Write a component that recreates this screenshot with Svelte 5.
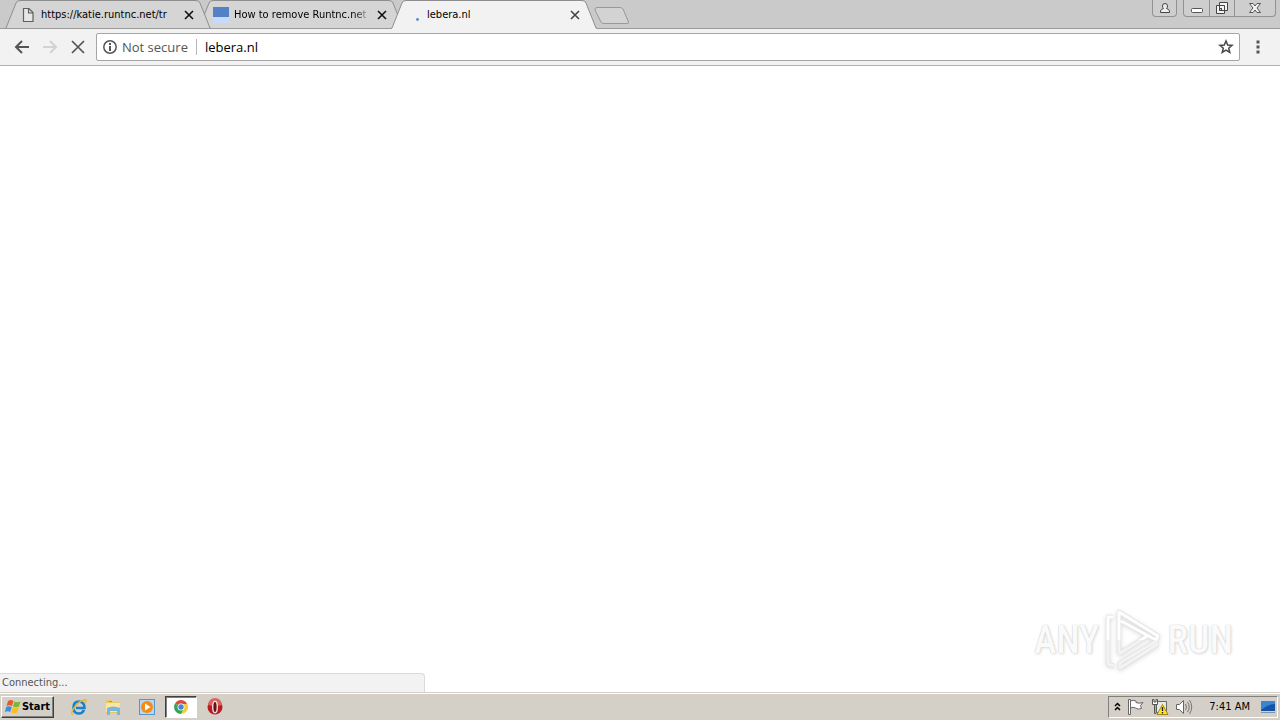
<script>
  const tabs = [
    { title: 'https://katie.runtnc.net/tr', icon: 'page', front: true },
    { title: 'How to remove Runtnc.net r', icon: 'site', fade: true },
    { title: 'lebera.nl', icon: 'loading', active: true }
  ];
  let address = $state('lebera.nl');
</script>

<div class="screen">
  <header class="strip">
    <div class="tabs" role="tablist">
      {#each tabs as tab}
        <div class="tab" class:active={tab.active} class:front={tab.front}>
          <svg class="shape" viewBox="0 0 206 29" aria-hidden="true">
            <path d="M0 29 L1 28 L11 3 Q12 .5 15 .5 H191 Q194 .5 195 3 L205 28 L206 29Z" fill={tab.active ? '#f2f2f2' : '#d5d5d5'} />
            <path d="M0 28.5 L1 28 L11 3 Q12 .5 15 .5 H191 Q194 .5 195 3 L205 28 L206 28.5" fill="none" stroke="#8e8e8e" />
            {#if !tab.active}<path d="M1 28.500H205" stroke="#999" />{/if}
          </svg>
          <span class="fav">
            {#if tab.icon === 'page'}
              <svg width="16" height="16" viewBox="0 0 16 16"><path d="M3.5 1.5H9L13 5.5V14.5H3.5Z M8.5 1.5V6H13" fill="#e6e6e6" stroke="#606060" stroke-width="1.2" /></svg>
            {:else if tab.icon === 'site'}
              <svg width="16" height="16" viewBox="0 0 16 16"><path d="M0 0H16V10H0Z" fill="#557fc7" /><path d="M0 10H16V16H0Z" fill="#c6dafa" /></svg>
            {:else}
              <svg width="16" height="16" viewBox="0 0 16 16"><circle cx="11.500" cy="12.500" r="1.4" fill="#4c8bd8" /></svg>
            {/if}
          </span>
          <button class="title" class:fade={tab.fade} role="tab" aria-selected={!!tab.active}>{tab.title}</button>
          <button class="close" aria-label="Close tab"><svg width="10" height="10" viewBox="0 0 10 10"><path d="M1 1L9 9M9 1L1 9" stroke={tab.active ? '#444' : '#111'} stroke-width="1.6" /></svg></button>
        </div>
      {/each}
      <button class="newtab" aria-label="New tab"><svg width="36" height="18" viewBox="0 0 36 18"><path d="M3 .5H26Q28 .5 29 2L34.500 15Q35 16.500 33 16.500H10Q8 16.500 7 15L1 3Q.5 .5 3 .5Z" fill="#d3d3d3" stroke="#999" /></svg></button>
    </div>
    <div class="wincontrols">
      <button class="profile" aria-label="Profile"><svg width="12" height="12" viewBox="0 0 12 12"><path d="M1.500 10.500V9Q2 7 4.500 6.500Q3.500 5.500 3.500 4Q3.500 1.500 6 1.500T8.500 4Q8.500 5.500 7.500 6.500Q10 7 10.500 9V10.500Z" fill="#eee" stroke="#444" /></svg></button>
      <div class="wingroup">
        <button aria-label="Minimize"><svg width="14" height="14" viewBox="0 0 14 14"><rect x="1.500" y="7.500" width="11" height="4" rx="1" fill="#fff" stroke="#555" /></svg></button>
        <button aria-label="Restore"><svg width="14" height="14" viewBox="0 0 14 14"><path d="M4.500 1.500H12.500V9.500H4.500Z M1.500 4.500H9.500V12.500H1.500Z" fill="#f4f4f4" stroke="#444" /><rect x="4.500" y="7.500" width="2" height="2" fill="#ccc" stroke="#444" /></svg></button>
        <button class="wide" aria-label="Close window"><svg width="14" height="12" viewBox="0 0 14 12"><path d="M1.500 1.500H5L7 4L9 1.500H12.500L9 6L12.500 10.500H9L7 8L5 10.500H1.500L5 6Z" fill="#f4f4f4" stroke="#555" /></svg></button>
      </div>
    </div>
  </header>

  <nav class="toolbar">
    <button class="nav" aria-label="Back"><svg width="16" height="16" viewBox="0 0 16 16"><path d="M15 8H2M8 2L2 8L8 14" fill="none" stroke="#555" stroke-width="2" /></svg></button>
    <button class="nav" aria-label="Forward" disabled><svg width="16" height="16" viewBox="0 0 16 16"><path d="M1 8H14M8 2L14 8L8 14" fill="none" stroke="#d2d2d2" stroke-width="2" /></svg></button>
    <button class="nav" aria-label="Stop loading"><svg width="16" height="16" viewBox="0 0 16 16"><path d="M2 2L14 14M14 2L2 14" stroke="#555" stroke-width="1.700" /></svg></button>
    <div class="omnibox">
      <svg width="16" height="16" viewBox="0 0 16 16" aria-hidden="true"><circle cx="8" cy="8" r="6.200" fill="none" stroke="#555" stroke-width="1.500" /><path d="M8 4V6M8 7V12" stroke="#555" stroke-width="2" /></svg>
      <label for="url">Not secure</label>
      <input id="url" type="text" bind:value={address} spellcheck="false" />
      <button class="star" aria-label="Bookmark this page"><svg width="16" height="16" viewBox="0 0 16 16"><path d="M8 2L9.700 6.100L14 6.400L10.700 9.200L11.800 13.500L8 11.200L4.200 13.500L5.300 9.200L2 6.400L6.300 6.100Z" fill="none" stroke="#484848" stroke-width="1.500" /></svg></button>
    </div>
    <button class="menu" aria-label="Menu"><svg width="4" height="14" viewBox="0 0 4 14"><path d="M.5 .5H3.500V3.500H.5ZM.5 5.500H3.500V8.500H.5ZM.5 10.500H3.500V13.500H.5Z" fill="#555" /></svg></button>
  </nav>

  <main>
    <div class="watermark">
      <span>ANY</span>
      <svg width="58" height="64" viewBox="0 0 58 64" aria-hidden="true">
        <defs><linearGradient id="wm" gradientUnits="userSpaceOnUse" x1="0" y1="0" x2="0" y2="64"><stop offset=".5" stop-color="#fff" /><stop offset=".5" stop-color="#f3f3f3" /></linearGradient></defs>
        <g fill="none" stroke-linejoin="round">
          <path d="M9 9H4V56L10 58M15 46V4L54 28L52 32L17 13M54 32L16 55V60L54 36M15 46L43 28" stroke="#e2e2e2" stroke-width="4.500" />
          <path d="M9 9H4V56L10 58M15 46V4L54 28L52 32L17 13M54 32L16 55V60L54 36M15 46L43 28" stroke="url(#wm)" stroke-width="3" />
        </g>
      </svg>
      <span>RUN</span>
    </div>
    <div class="status" role="status">Connecting...</div>
  </main>

  <footer class="taskbar">
    <button class="start">
      <svg width="17" height="16" viewBox="0 0 17 16"><path d="M3 2Q6 0 8.500 2L7 7Q4.500 5.500 1.500 7Z" fill="#e65b2c" /><path d="M9.500 2.500Q12 4 15.500 2.500L14 7.500Q11 9 8 7.500Z" fill="#7db72f" /><path d="M1.200 8Q4 6.500 6.700 8L5.200 13Q3 11.500 0 13Z" fill="#3b8edb" /><path d="M7.700 8.500Q10.500 10 13.700 8.500L12.200 13.500Q9 15 6.200 13.500Z" fill="#f7bd20" /></svg>
      Start
    </button>
    <div class="quick">
      <button aria-label="Internet Explorer"><svg width="18" height="18" viewBox="0 0 18 18"><path d="M14 12Q12.500 15.500 8.700 15.500Q3.500 15.500 3.500 9.500T9 3.500Q14.500 4 14.500 10H6" fill="none" stroke="#1683cf" stroke-width="2.600" /><path d="M3 16.500Q0 16 4 10Q9 3 14 2Q18 1 15 5" fill="none" stroke="#e9b835" stroke-width="1.400" /></svg></button>
      <button aria-label="Explorer"><svg width="18" height="18" viewBox="0 0 18 18"><path d="M2 2H7L8 4H15V15H2Z" fill="#e8c765" /><path d="M2 5H16L15 14H2Z" fill="#f9e7a1" /><path d="M3 17V10Q9 7 16 10V17H13V13H6V17Z" fill="#77b8dc" /><path d="M5 3H8V4H5Z" fill="#70b56c" /></svg></button>
      <button aria-label="Media Player"><svg width="18" height="18" viewBox="0 0 18 18"><rect x="1.500" y="1.500" width="15" height="15" fill="#b9d6ef" stroke="#5596ce" /><circle cx="9" cy="9" r="6" fill="#f28b17" /><path d="M7 5.500L12.500 9L7 12.500Z" fill="#fff" /></svg></button>
      <button class="current" aria-label="Chrome"><svg width="16" height="16" viewBox="0 0 16 16"><path d="M8 8L2 4.500A7 7 0 0 1 14 4.500Z" fill="#df4b3d" /><path d="M8 8L2 4.500A7 7 0 0 0 8 15L11 10Z" fill="#31a653" /><path d="M8 8V5H14.300A7 7 0 0 1 8 15L11 10Z" fill="#f7ca39" /><circle cx="8" cy="8" r="3.500" fill="#fff" /><circle cx="8" cy="8" r="2.700" fill="#4285d9" /></svg></button>
      <button aria-label="Opera"><svg width="18" height="18" viewBox="0 0 18 18"><circle cx="9" cy="9" r="7.500" fill="#b51e20" /><path d="M2 7A7 7 0 0 1 16 7Q9 9 2 7" fill="#d96360" /><ellipse cx="9" cy="9" rx="2.300" ry="5.700" fill="#691216" stroke="#f5dddd" stroke-width="1.400" /></svg></button>
    </div>
    <div class="tray">
      <button aria-label="Show hidden icons"><svg width="7" height="11" viewBox="0 0 7 11"><path d="M1 4L3.500 1.500L6 4M1 8L3.500 5.500L6 8" fill="none" stroke="#000" stroke-width="1.500" /></svg></button>
      <button aria-label="Action Center"><svg width="18" height="18" viewBox="0 0 18 18"><path d="M1.500 1.500H3.500V16.500H1.500ZM3.500 3Q6 1.500 9 3V4.500Q12 6 16 4.500L13.500 7.500L14.500 10.500Q11 12 8.500 10Q6 8.500 3.500 10Z" fill="#fff" stroke="#666" /></svg></button>
      <button aria-label="Network"><svg width="18" height="18" viewBox="0 0 18 18"><path d="M5.500 3.500H15.500V14.500H5.500Z" fill="#e9e9e3" stroke="#666" /><path d="M1.500 1.500H3V4H5V1.500H6.500V6.500H1.500ZM3.500 6.500H5V15.500H3.500Z" fill="#fff" stroke="#555" /><path d="M11.500 6.500L17 16.500H6Z" fill="#ffe52a" stroke="#a58915" /><path d="M11.500 9V13M11.500 14V15.500" stroke="#222" stroke-width="1.400" /></svg></button>
      <button aria-label="Volume"><svg width="18" height="18" viewBox="0 0 18 18"><path d="M1.500 6.500H4.500L8.500 2.500V15.500L4.500 11.500H1.500Z" fill="#fff" stroke="#666" /><path d="M10.500 6Q12.500 9 10.500 12M12.500 4Q16 9 12.500 14M14.500 2Q19 9 14.500 16" fill="none" stroke="#777" /></svg></button>
      <time>7:41 AM</time>
      <button aria-label="Show desktop"><svg width="16" height="14" viewBox="0 0 16 14"><path d="M1 1H15V11H1Z" fill="#1653a5" /><path d="M1 1H15V4Q8 4 1 10Z" fill="#3985d5" /><path d="M1 12H15V13H1Z" fill="#7895b5" /></svg></button>
    </div>
  </footer>
</div>

<style>
  :global(body) { margin: 0; }
  .screen { height: 100vh; display: flex; flex-direction: column; overflow: hidden; background: #fff; color: #000; font: 11px/14px "DejaVu Sans Condensed", "Noto Sans", sans-serif; }
  button { margin: 0; padding: 0; border: 0; background: none; color: inherit; font: inherit; display: flex; align-items: center; justify-content: center; }
  svg { display: block; flex: none; }
  .strip { height: 29px; flex: none; display: flex; justify-content: space-between; background: #cacaca; box-shadow: inset 0 -1px #999; }
  .tabs { display: flex; align-items: flex-start; padding-left: 5px; }
  .tab { position: relative; box-sizing: border-box; width: 206px; height: 29px; padding: 0 14px 0 15px; display: flex; align-items: center; margin-right: -13px; }
  .active, .front { z-index: 1; }
  .shape { position: absolute; inset: 0; width: 100%; height: 100%; }
  .fav, .title, .close { position: relative; }
  .title { flex: 1; min-width: 0; margin-left: 5px; margin-right: 3px; justify-content: flex-start; white-space: nowrap; }
  .fade { mask-image: linear-gradient(90deg, #000 88%, transparent); }
  .close { width: 16px; height: 16px; }
  .newtab { margin-left: 10px; padding-top: 7px; }
  .wincontrols { display: flex; align-items: flex-start; gap: 6px; padding-right: 4px; }
  .profile, .wingroup { box-sizing: border-box; height: 17px; border: 1px solid #929292; border-top: 0; border-radius: 0 0 4px 4px; background: #cecece; }
  .profile { width: 25px; }
  .wingroup { display: flex; }
  .wingroup button { width: 25px; height: 16px; }
  .wingroup button + button { border-left: 1px solid #929292; }
  .wingroup .wide { width: 41px; }
  .toolbar { box-sizing: border-box; height: 37px; flex: none; display: flex; align-items: center; padding: 0 12px 0 8px; border-bottom: 1px solid #b2b2b2; background: #f2f2f2; }
  .nav { width: 28px; height: 28px; }
  .omnibox { box-sizing: border-box; height: 28px; flex: 1; min-width: 0; display: flex; align-items: center; margin-left: 4px; padding: 0 5px; border: 1px solid #a6a6a6; border-radius: 2px; background: #fff; font: 13px/18px "Open Sans", "Noto Sans", sans-serif; }
  .omnibox label { margin-left: 4px; padding-right: 8px; border-right: 1px solid #b5b5b5; color: #555; line-height: 16px; }
  .omnibox input { flex: 1; min-width: 0; border: 0; outline: 0; padding: 0 8px; background: none; color: #000; font: inherit; }
  .star { width: 16px; height: 16px; }
  .menu { width: 12px; height: 28px; margin-left: 12px; margin-right: 4px; }
  main { position: relative; flex: 1; min-height: 0; }
  .status { position: absolute; left: 0; bottom: 0; box-sizing: border-box; width: 33.2%; height: 19px; padding: 2px; border: 1px solid #dadada; border-left: 0; border-bottom: 0; border-radius: 0 4px 0 0; background: #f2f2f2; color: #555; }
  .watermark { position: absolute; right: 47px; bottom: 20px; display: flex; align-items: center; gap: 5px; color: #fafafa; font: 500 38px/64px "Roboto Condensed", "Liberation Sans Narrow", sans-serif; text-shadow: 0 0 1px #bbb, 1px 1px 3px #ddd; }
  .watermark svg { filter: drop-shadow(0 1px 2px #ddd); }
  .taskbar { box-sizing: border-box; height: 28px; flex: none; display: flex; align-items: flex-end; padding: 0 2px 2px 1px; border-top: 1px solid #d4d0c8; background: #d4d0c8; box-shadow: inset 0 1px #fff; }
  .start { width: 53px; height: 22px; box-sizing: border-box; border: 1px solid; border-color: #fff #404040 #404040 #fff; box-shadow: inset -1px -1px #808080; font-weight: 700; }
  .quick { display: flex; margin-left: 9px; gap: 2px; }
  .quick button { box-sizing: border-box; width: 32px; height: 22px; }
  .quick .current { background: #fff; border: 1px solid; border-color: #404040 #fff #fff #404040; box-shadow: inset 1px 1px #808080; }
  .tray { box-sizing: border-box; height: 22px; display: flex; align-items: center; margin-left: auto; padding: 0 1px 0 5px; border: 1px solid; border-color: #808080 #fff #fff #808080; gap: 6px; }
  .tray time { margin: 0 4px 0 10px; }
</style>
